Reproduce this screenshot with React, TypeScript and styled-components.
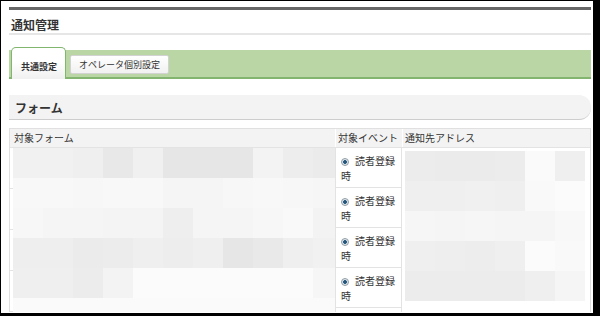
import styled, { createGlobalStyle } from 'styled-components';

// 通知管理 — 共通設定タブ（フォーム一覧、モザイク部分はブロックで再現）

const GlobalStyle = createGlobalStyle`
  html, body {
    margin: 0;
    padding: 0;
    background: #ffffff;
  }
  body {
    font-family: "Noto Sans CJK JP", "Noto Sans", sans-serif;
    color: #333333;
  }
`;

// ─── mosaic data ─────────────────────────────────────────────────────────────

const FORM_MOSAIC: string[][] = [
  ['#f1f1f1', '#f1f1f1', '#efefef', '#e8e8e8', '#f0f0f0', '#e6e6e6', '#e6e6e6', '#e6e6e6', '#f3f3f3', '#ededed', '#ebebeb'],
  ['#f8f8f8', '#f8f8f8', '#f7f7f7', '#f8f8f8', '#f8f8f8', '#f5f5f5', '#f5f5f5', '#f7f7f7', '#f8f8f8', '#f7f7f7', '#f6f6f6'],
  ['#f7f7f7', '#f5f5f5', '#f5f5f5', '#f4f4f4', '#f4f4f4', '#eeeeee', '#f5f5f5', '#f5f5f5', '#f7f7f7', '#f9f9f9', '#f3f3f3'],
  ['#eeeeee', '#eeeeee', '#ebebeb', '#ececec', '#efefef', '#ededed', '#efefef', '#e6e6e6', '#e9e9e9', '#efefef', '#f1f1f1'],
  ['#efefef', '#efefef', '#ececec', '#f3f3f3', '#fbfbfb', '#fbfbfb', '#fbfbfb', '#fbfbfb', '#fbfbfb', '#fbfbfb', '#f6f6f6'],
  ['#fafafa', '#fafafa', '#fafafa', '#fafafa', '#fafafa', '#fafafa', '#fafafa', '#fafafa', '#fafafa', '#fafafa', '#fafafa'],
];

const ADDRESS_MOSAIC: string[][] = [
  ['#ececec', '#ebebeb', '#ebebeb', '#ececec', '#fafafa', '#efefef'],
  ['#efefef', '#efefef', '#f0f0f0', '#efefef', '#f9f9f9', '#fbfbfb'],
  ['#f6f6f6', '#f5f5f5', '#f6f6f6', '#f5f5f5', '#f5f5f5', '#f8f8f8'],
  ['#efefef', '#eeeeee', '#ededed', '#efefef', '#fbfbfb', '#f9f9f9'],
  ['#ececec', '#ececec', '#ececec', '#ececec', '#efefef', '#f5f5f5'],
];

const EVENT_ROWS = ['読者登録時', '読者登録時', '読者登録時', '読者登録時'];

// ─── layout ──────────────────────────────────────────────────────────────────

const Frame = styled.div`
  width: 600px;
  height: 316px;
  box-sizing: border-box;
  border-style: solid;
  border-color: #000000;
  border-width: 1px 7px 3px 1px;
  padding: 6px 2px 0 8px;
  overflow: hidden;
  background: #ffffff;
`;

const PageHeader = styled.div`
  border-top: 3px solid #676767;
  border-bottom: 2px solid #e6e6e6;
  height: 28px;
  padding: 5px 0 0 2px;
  box-sizing: border-box;
`;

const PageTitle = styled.h1`
  margin: 0;
  font-size: 12px;
  font-weight: 700;
  line-height: 20px;
  color: #333333;
`;

// ─── tabs ────────────────────────────────────────────────────────────────────

const TabBar = styled.div`
  margin-top: 15px;
  height: 27px;
  background: #b9d6a4;
  border-bottom: 2px solid #84b570;
  display: flex;
  align-items: flex-end;
  gap: 4px;
  padding-left: 2px;
`;

const ActiveTab = styled.div`
  height: 32px;
  width: 55px;
  margin-bottom: -2px;
  box-sizing: border-box;
  border: 1px solid #80b66d;
  border-bottom: none;
  border-radius: 5px 5px 0 0;
  background: linear-gradient(#ffffff 45%, #f0f0f0);
  display: flex;
  align-items: center;
  padding: 6px 0 0 9px;
  font-size: 9px;
  font-weight: 700;
  color: #333333;
  white-space: nowrap;
`;

const TabButton = styled.div`
  height: 19px;
  margin-bottom: 3px;
  box-sizing: border-box;
  border: 1px solid #d2d2d2;
  border-radius: 2px;
  background: linear-gradient(#ffffff, #f1f1f1);
  display: flex;
  align-items: center;
  padding: 0 8px;
  font-size: 9px;
  color: #333333;
  white-space: nowrap;
`;

// ─── section ─────────────────────────────────────────────────────────────────

const SectionHeader = styled.div`
  margin-top: 16px;
  height: 25px;
  box-sizing: border-box;
  background: #f3f3f3;
  border-bottom: 1px solid #cdcdcd;
  border-radius: 0 12px 12px 0;
  display: flex;
  align-items: center;
  padding-left: 6px;
`;

const SectionTitle = styled.h2`
  margin: 0;
  font-size: 12px;
  font-weight: 700;
  color: #333333;
`;

// ─── table ───────────────────────────────────────────────────────────────────

const Table = styled.div`
  margin-top: 8px;
  border: 1px solid #e0e0e0;
  border-bottom: none;
`;

const HeadRow = styled.div`
  display: grid;
  grid-template-columns: 325px 67px 1fr;
  background: #f3f3f3;
  border-bottom: 1px solid #e3e3e3;
`;

const HeadCell = styled.div<{ $first?: boolean }>`
  height: 18px;
  line-height: 18px;
  font-size: 10px;
  color: #333333;
  padding-left: ${(p) => (p.$first ? '4px' : '2px')};
  border-left: ${(p) => (p.$first ? 'none' : '1px solid #ffffff')};
  white-space: nowrap;
`;

const Body = styled.div`
  display: grid;
  grid-template-columns: 325px 67px 1fr;
`;

const FormColumn = styled.div`
  position: relative;
`;

const FormRow = styled.div`
  height: 40px;
  border-bottom: 1px solid #e3e3e3;
`;

const MosaicOverlay = styled.div`
  position: absolute;
  top: 0;
  left: 3px;
  right: 0;
  bottom: 0;
  overflow: hidden;
`;

const EventColumn = styled.div`
  border-left: 1px solid #e3e3e3;
  border-right: 1px solid #e3e3e3;
`;

const EventCell = styled.div`
  height: 40px;
  padding: 5px 1px 0 5px;
  box-sizing: border-box;
  border-bottom: 1px solid #e3e3e3;
  font-size: 10px;
  line-height: 15px;
  color: #333333;
`;

const Radio = styled.span`
  display: inline-block;
  width: 8px;
  height: 8px;
  box-sizing: border-box;
  border-radius: 50%;
  border: 1px solid #8f9ba4;
  background: radial-gradient(circle, #1f4e72 0, #2b5f86 1.6px, #dfe6eb 2.2px);
  margin-right: 6px;
  vertical-align: -1px;
`;

const AddressColumn = styled.div`
  padding: 3px 0 0 3px;
`;

const MosaicGrid = styled.div<{ $cols: number }>`
  display: grid;
  grid-template-columns: repeat(${(p) => p.$cols}, 30px);
  grid-auto-rows: 30px;
`;

const Block = styled.div<{ $c: string }>`
  background: ${(p) => p.$c};
`;

const Mosaic = ({ rows }: { rows: string[][] }) => (
  <MosaicGrid $cols={rows[0].length}>
    {rows.flatMap((row, r) => row.map((c, i) => <Block key={`${r}-${i}`} $c={c} />))}
  </MosaicGrid>
);

// ─── component ───────────────────────────────────────────────────────────────

export default function App() {
  return (
    <>
      <GlobalStyle />
      <Frame>
        <PageHeader>
          <PageTitle>通知管理</PageTitle>
        </PageHeader>

        <TabBar>
          <ActiveTab>共通設定</ActiveTab>
          <TabButton>オペレータ個別設定</TabButton>
        </TabBar>

        <SectionHeader>
          <SectionTitle>フォーム</SectionTitle>
        </SectionHeader>

        <Table>
          <HeadRow>
            <HeadCell $first>対象フォーム</HeadCell>
            <HeadCell>対象イベント</HeadCell>
            <HeadCell>通知先アドレス</HeadCell>
          </HeadRow>
          <Body>
            <FormColumn>
              {EVENT_ROWS.map((_, i) => (
                <FormRow key={i} />
              ))}
              <MosaicOverlay>
                <Mosaic rows={FORM_MOSAIC} />
              </MosaicOverlay>
            </FormColumn>
            <EventColumn>
              {EVENT_ROWS.map((label, i) => (
                <EventCell key={i}>
                  <Radio />
                  {label}
                </EventCell>
              ))}
            </EventColumn>
            <AddressColumn>
              <Mosaic rows={ADDRESS_MOSAIC} />
            </AddressColumn>
          </Body>
        </Table>
      </Frame>
    </>
  );
}
